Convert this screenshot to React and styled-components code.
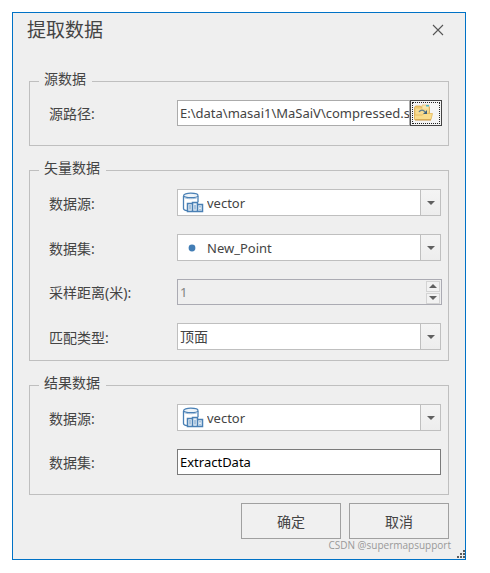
import React from 'react';
import styled, { createGlobalStyle } from 'styled-components';

const GlobalStyle = createGlobalStyle`
  * {
    box-sizing: border-box;
  }

  body {
    margin: 0;
    background: #fff;
    color: #444;
    font-family: 'Noto Sans', 'Noto Sans CJK SC', sans-serif;
    font-size: 14px;
  }

  button,
  input,
  select {
    font: inherit;
    color: inherit;
  }
`;

const Dialog = styled.form`
  position: relative;
  margin: 12px 24px 13px 12px;
  border: 1px solid #0072c6;
  background: #efefef;
`;

const Header = styled.header`
  display: flex;
  align-items: center;
  justify-content: space-between;
  height: 34px;
  margin-bottom: 24px;
  padding: 0 12px 0 14px;
`;

const Title = styled.h1`
  margin: 0;
  font-size: 19px;
  font-weight: 400;
  line-height: 24px;
`;

const CloseButton = styled.button`
  display: grid;
  place-items: center;
  width: 30px;
  height: 24px;
  padding: 0;
  border: 0;
  background: none;
`;

const Groups = styled.div`
  display: grid;
  gap: 14px;
  padding: 0 16px;
`;

const Group = styled.fieldset`
  display: grid;
  gap: 18px;
  min-width: 0;
  margin: 0;
  padding: 9px 7px ${props => (props.$compact ? 10 : 19)}px 19px;
  border: 1px solid #bfbfbf;
`;

const Legend = styled.legend`
  margin-left: -10px;
  padding: 0 6px 4px 5px;
  line-height: 16px;
`;

const Row = styled.div`
  display: grid;
  grid-template-columns: 128px minmax(0, 1fr);
  align-items: center;
  margin-right: ${props => (props.$wide ? -1 : 0)}px;
`;

const Label = styled.label`
  padding-top: 2px;
  line-height: 20px;
`;

const TextInput = styled.input`
  flex: 1;
  width: 100%;
  min-width: 0;
  height: 26px;
  padding: 0 0 0 2px;
  border: 1px solid ${props => (props.$active ? '#7a7a7a' : '#ababab')};
  border-radius: 0;
  outline: 0;
  background: #fff;
  color: ${props => (props.$active ? '#000' : '#444')};
  font-size: 13px;
`;

const PathBox = styled.div`
  display: flex;
`;

const BrowseButton = styled.button`
  display: flex;
  align-items: center;
  width: 32px;
  height: 26px;
  padding: 0 0 0 1px;
  border: 1px solid #444;
  background: #f4f4f4;
  outline: 1px dotted #222;
  outline-offset: -3px;
`;

const SelectBox = styled.div`
  display: grid;
  grid-template-columns: 29px 1fr 20px;
  align-items: center;
  height: 27px;
  border: 1px solid #bfbfbf;
  background: #fff;
`;

const SelectIcon = styled.span`
  display: grid;
  grid-area: 1 / 1;
  justify-items: center;
  z-index: 1;
  pointer-events: none;
`;

const NativeSelect = styled.select`
  grid-area: 1 / 1 / 2 / -1;
  width: 100%;
  height: 25px;
  padding: 0 24px 0 ${props => (props.$hasIcon ? 29 : 2)}px;
  border: 0;
  border-radius: 0;
  appearance: none;
  background: transparent;
  font-size: ${props => (props.$hasIcon ? 13 : 14)}px;
`;

const SelectArrow = styled.span`
  display: grid;
  grid-area: 1 / 3;
  place-items: center;
  height: 25px;
  border-left: 1px solid #bfbfbf;
  background: linear-gradient(#f4f4f4, #ededed);
  pointer-events: none;
`;

const NumberBox = styled.div`
  display: flex;
  align-items: center;
  height: 26px;
  padding-right: 1px;
  border: 1px solid #ababb3;
`;

const NumberInput = styled.input`
  flex: 1;
  min-width: 0;
  height: 24px;
  padding: 0 2px;
  border: 0;
  background: transparent;
  color: #838383;
  font-size: 13px;
`;

const Spinner = styled.div`
  display: grid;
  gap: 1px;
`;

const SpinButton = styled.button`
  display: grid;
  place-items: center;
  width: 14px;
  height: 11px;
  padding: 0;
  border: 1px solid #d4d4d4;
  background: #f2f2f2;
`;

const Footer = styled.footer`
  display: flex;
  justify-content: flex-end;
  gap: 8px;
  padding: 8px 16px 0;
`;

const FooterButton = styled.button`
  width: 100px;
  height: 36px;
  padding: 0;
  border: 1px solid #a0a0a0;
  background: #f0f0f0;
`;

const Watermark = styled.p`
  margin: 0;
  padding: 0 14px 8px;
  color: #999;
  font-family: 'Open Sans', sans-serif;
  font-size: 10px;
  line-height: 12px;
  text-align: right;
`;

const Grip = styled.svg`
  position: absolute;
  right: -1px;
  bottom: 0;
`;

const CloseIcon = () => (
  <svg width="12" height="12" viewBox="0 0 12 12" stroke="#555" strokeWidth="1.1">
    <path d="M1 1l10 10M11 1L1 11" />
  </svg>
);

const FolderIcon = () => (
  <svg width="22" height="20" viewBox="0 0 22 20">
    <path d="M2.5 4.5l1-1.5h5l1 1h8v12h-15z" fill="#edc66c" stroke="#d9a94e" strokeWidth="0.8" />
    <path d="M10 2h7v7h-7z" fill="#f7e7b0" stroke="#dfb65e" strokeWidth="0.6" />
    <path d="M14 2h3v1.5h-3z" fill="#4fb8c8" />
    <path d="M3.5 5.500h13V14h-13z" fill="#f8dc91" />
    <path d="M2.5 16.500V12h8l1.500-1.500h8.500L19 16.500z" fill="#f9dd8c" stroke="#e3b75c" strokeWidth="0.8" />
    <path d="M3 17h16" stroke="#c99441" />
    <path d="M7 9c1.500-2.500 4.500-2.500 6 0" fill="none" stroke="#5f7f8c" strokeWidth="1.3" />
    <path d="M15 7v4h-4z" fill="#3d627e" />
  </svg>
);

const DatasourceIcon = () => (
  <svg width="22" height="21" viewBox="0 0 22 21" fill="none" stroke="#4a80b5">
    <path d="M1.5 4v12.5c0 1 1.2 1.800 3.500 2.200" strokeWidth="1.3" />
    <path d="M16 4v6" strokeWidth="1.3" />
    <ellipse cx="8.800" cy="3.400" rx="7.200" ry="2.200" fill="#eef4f9" strokeWidth="1.2" />
    <path d="M2.200 5.500c2 1.600 11.200 1.600 13.200 0" stroke="#9dbbd8" />
    <path d="M5.500 11.500h5v8h-5zM10.500 10.500h5v9h-5zM15.500 12.500h5v7h-5z" fill="#e6eff7" strokeWidth="1.500" />
    <path d="M18 14v1.500M18 17v1.500M8 13v4.500M13 13v4.500" stroke="#6c98c4" />
  </svg>
);

const PointIcon = () => (
  <svg width="10" height="10" viewBox="0 0 10 10">
    <circle cx="4" cy="5" r="3.4" fill="#427db5" />
  </svg>
);

const Triangle = ({ up }) => (
  <svg width="8" height="4" viewBox="0 0 8 4" fill="#606060">
    <path d={up ? 'M0 4h8L4 0z' : 'M0 0h8L4 4z'} />
  </svg>
);

const SelectField = ({ id, label, value, icon }) => (
  <Row>
    <Label htmlFor={id}>{label}</Label>
    <SelectBox>
      <NativeSelect id={id} defaultValue={value} $hasIcon={Boolean(icon)}>
        <option value={value}>{value}</option>
      </NativeSelect>
      {icon && <SelectIcon>{icon}</SelectIcon>}
      <SelectArrow>
        <Triangle />
      </SelectArrow>
    </SelectBox>
  </Row>
);

const App = () => (
  <>
    <GlobalStyle />
    <Dialog onSubmit={e => e.preventDefault()}>
      <Header>
        <Title>提取数据</Title>
        <CloseButton type="button" aria-label="关闭">
          <CloseIcon />
        </CloseButton>
      </Header>

      <Groups>
        <Group>
          <Legend>源数据</Legend>
          <Row $wide>
            <Label htmlFor="path">源路径:</Label>
            <PathBox>
              <TextInput id="path" defaultValue="E:\data\masai1\MaSaiV\compressed.s" />
              <BrowseButton type="button" aria-label="浏览">
                <FolderIcon />
              </BrowseButton>
            </PathBox>
          </Row>
        </Group>

        <Group $compact>
          <Legend>矢量数据</Legend>
          <SelectField id="vector-source" label="数据源:" value="vector" icon={<DatasourceIcon />} />
          <SelectField id="vector-dataset" label="数据集:" value="New_Point" icon={<PointIcon />} />
          <Row $wide>
            <Label htmlFor="distance">采样距离(米):</Label>
            <NumberBox>
              <NumberInput id="distance" defaultValue="1" disabled />
              <Spinner>
                <SpinButton type="button" aria-label="增加" disabled>
                  <Triangle up />
                </SpinButton>
                <SpinButton type="button" aria-label="减少" disabled>
                  <Triangle />
                </SpinButton>
              </Spinner>
            </NumberBox>
          </Row>
          <SelectField id="match-type" label="匹配类型:" value="顶面" />
        </Group>

        <Group>
          <Legend>结果数据</Legend>
          <SelectField id="result-source" label="数据源:" value="vector" icon={<DatasourceIcon />} />
          <Row>
            <Label htmlFor="result-dataset">数据集:</Label>
            <TextInput id="result-dataset" defaultValue="ExtractData" $active />
          </Row>
        </Group>
      </Groups>

      <Footer>
        <FooterButton type="submit">确定</FooterButton>
        <FooterButton type="button">取消</FooterButton>
      </Footer>
      <Watermark>CSDN @supermapsupport</Watermark>

      <Grip width="9" height="9" viewBox="0 0 9 9" fill="#5c5c5c">
        <path d="M6 0h2v2H6zM3 3h2v2H3zM6 3h2v2H6zM0 6h2v2H0zM3 6h2v2H3zM6 6h2v2H6z" />
      </Grip>
    </Dialog>
  </>
);

export default App;
